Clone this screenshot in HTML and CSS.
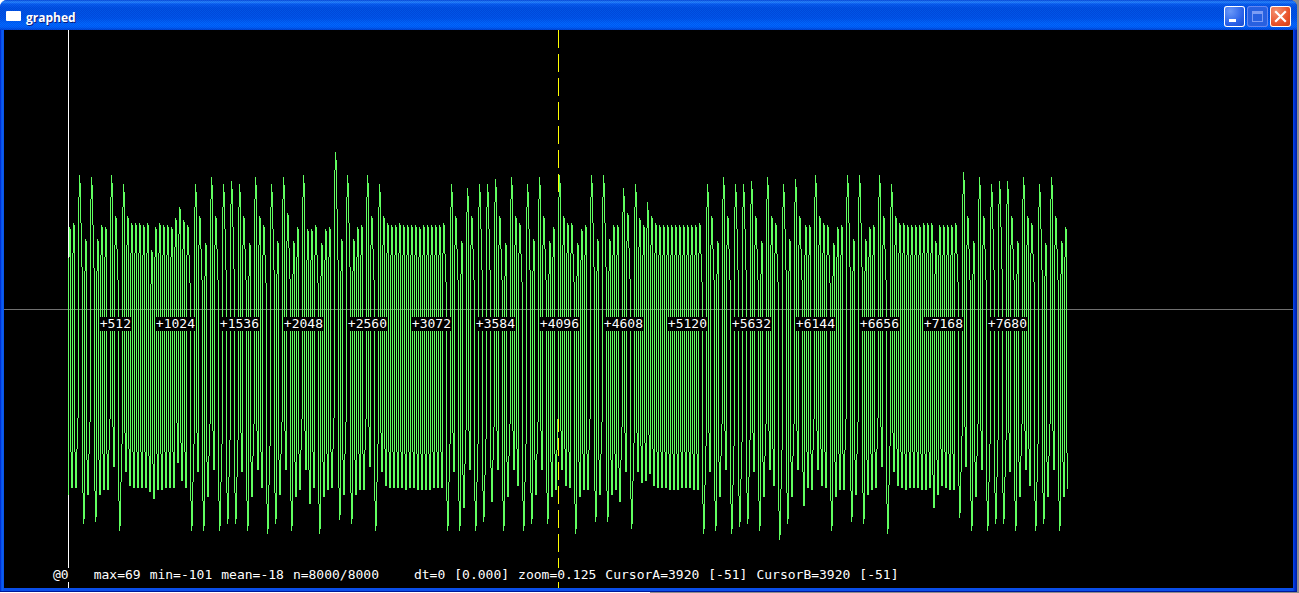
FILE: index.html
```html
<!DOCTYPE html>
<html lang="en">
<head>
<meta charset="utf-8">
<title>graphed</title>
<link rel="stylesheet" href="styles.css">
</head>
<body>
<main class="window">
  <header class="titlebar">
    <span class="app-icon"></span>
    <h1 class="title">graphed</h1>
    <div class="controls">
      <button class="control" type="button" aria-label="Minimize">
        <svg width="21" height="21" shape-rendering="crispEdges"><path d="M5 13h7v3H5z" fill="#fff"/></svg>
      </button>
      <button class="control control-disabled" type="button" aria-label="Maximize" disabled>
        <svg width="21" height="21" shape-rendering="crispEdges"><path d="M5.500 5.500h10v10h-10zM5 6.500h11M5 7.500h11" fill="none" stroke="#7c9cf4"/></svg>
      </button>
      <button class="control control-close" type="button" aria-label="Close">
        <svg width="21" height="21"><path d="M6 6l9 9M15 6l-9 9" stroke="#fff" stroke-width="2.200" stroke-linecap="square"/></svg>
      </button>
    </div>
  </header>
  <section class="plot">
    <svg class="canvas" shape-rendering="crispEdges" role="img" aria-label="Waveform">
      <line class="axis" x1="0" y1="279.5" x2="100%" y2="279.5"/>
      <line class="origin" x1="64.5" y1="0" x2="64.5" y2="100%"/>
      <line class="cursor" x1="554.5" y1="0" x2="554.5" y2="100%"/>
      <path class="wave" id="wave" transform="translate(-4 -30)"/>
    </svg>
    <div class="ticks">
      <div><span>+512</span></div><div><span>+1024</span></div><div><span>+1536</span></div><div><span>+2048</span></div><div><span>+2560</span></div><div><span>+3072</span></div><div><span>+3584</span></div><div><span>+4096</span></div><div><span>+4608</span></div><div><span>+5120</span></div><div><span>+5632</span></div><div><span>+6144</span></div><div><span>+6656</span></div><div><span>+7168</span></div><div><span>+7680</span></div>
    </div>
    <footer class="status">
      <span class="offset">@0</span>
      <div class="stats"><span>max=69</span><span>min=-101</span><span>mean=-18</span><span>n=8000/8000</span></div>
      <div class="stats"><span>dt=0</span><span>[0.000]</span><span>zoom=0.125</span><span>CursorA=3920</span><span>[-51]</span><span>CursorB=3920</span><span>[-51]</span></div>
    </footer>
  </section>
</main>
<script src="wave.js"></script>
</body>
</html>
```
FILE: styles.css
```css
* { box-sizing: border-box; }
body { margin: 0; background: linear-gradient(90deg, #fff 50%, #8c8c8c 50%); }
.window {
  display: flex;
  flex-direction: column;
  height: calc(100vh - 1px);
  margin-right: 2px;
  padding: 0 4px 3px;
  background: linear-gradient(90deg, #0020c8 0, #0a62f4 2px, #0a4ee8 4px, #0a4ee8 calc(100% - 4px), #0038dc calc(100% - 3px), #001ca0 100%);
  border-radius: 7px 7px 0 0;
  border-bottom: 1px solid #001898;
}
.titlebar {
  display: flex;
  align-items: center;
  height: 30px;
  flex: none;
  margin: 0 -4px;
  padding: 3px 6px 0 6px;
  border-radius: 7px 7px 0 0;
  background:
    repeating-conic-gradient(rgba(0, 30, 180, .2) 0 25%, rgba(0, 110, 255, .14) 0 50%) 0 0 / 2px 2px,
    linear-gradient(#0848d8 0, #3090ff 2px, #0a60f0 4px, #0050e0 8px, #0054e6 18px, #0068ff 24px, #0064fc 27px, #0044d0 30px);
}
.app-icon { width: 15px; height: 10px; margin-top: -1px; background: #fff; border-radius: 1px; }
.title {
  flex: 1;
  margin: 2px 0 0 5px;
  font: bold 12px/18px "Open Sans", "Noto Sans", sans-serif;
  color: #fff;
  text-shadow: 1px 1px #0a1e80;
}
.controls { display: flex; gap: 2px; }
.control {
  width: 21px;
  height: 21px;
  padding: 0;
  border: 0;
  border-radius: 3px;
  box-shadow: inset 0 0 0 1px #fff;
  background: radial-gradient(circle at 30% 25%, #6a98f8, #2860e8 60%, #1848c8);
}
.control svg { display: block; }
.control-disabled { box-shadow: inset 0 0 0 1px #6688f0; background: #2860e0; }
.control-close { background: radial-gradient(circle at 30% 25%, #f49070, #e85028 60%, #c83c10); }
.plot { position: relative; flex: 1; min-height: 0; overflow: hidden; background: #000; }
.canvas { display: block; width: 100%; height: 100%; }
.axis { stroke: #707070; }
.origin { stroke: #fff; }
.cursor { stroke: #ff0; stroke-dasharray: 18 6; }
.wave { fill: none; stroke: #60ff60; }
.ticks, .status { position: absolute; color: #fff; font: 13px/14px "DejaVu Sans Mono", monospace; }
.ticks { top: 287px; left: 64px; display: flex; }
.ticks div { width: 64px; text-align: right; }
.ticks span { display: inline-block; padding-right: 1px; background: #000; }
.status { bottom: 6px; left: 49px; display: flex; gap: 35px; white-space: nowrap; }
.status span { background: #000; }
.offset { margin-right: -10px; }
.stats { display: flex; gap: 9px; }
```
FILE: wave.js
```js
// Extremes of the signal: column, level.
const peaks = `69,227 73,223 79,175 85,239 91,177 97,239 101,225 105,227 111,175 115,216 123,184 127,216 131,223 135,223 139,223 143,225 147,223 151,250 155,227 159,223 163,225 167,225 171,227 175,218 179,207 183,220 187,225 195,184 199,216 205,243 211,177 215,216 223,184 231,181 239,184 243,216 249,243 255,177 259,216 263,225 271,184 277,241 283,177 287,213 293,241 297,227 303,175 307,229 311,229 315,225 321,243 325,229 329,227 335,152 341,239 347,175 353,239 357,227 361,225 367,175 371,216 379,184 383,216 387,223 391,225 395,225 399,223 403,225 407,225 411,225 415,225 419,227 423,225 427,225 431,225 435,225 439,225 443,223 451,184 455,216 461,241 467,188 471,216 479,184 487,184 495,179 499,216 505,243 511,177 515,216 519,223 527,184 533,239 539,177 543,216 549,241 553,227 559,175 563,216 567,223 571,223 577,243 581,229 585,225 591,175 597,239 603,175 609,239 613,225 617,225 623,188 627,213 635,184 639,218 643,225 647,202 651,216 655,223 659,225 663,225 667,225 671,225 675,225 679,225 683,225 687,225 691,225 695,225 699,223 707,184 711,216 717,241 723,177 727,216 735,184 743,184 751,181 755,216 761,241 767,177 771,216 775,223 783,184 789,239 795,179 799,216 805,225 809,225 815,175 819,216 823,223 827,225 833,243 837,227 841,225 847,175 853,239 859,175 865,239 869,227 873,225 879,175 883,216 891,184 895,216 899,223 903,223 907,225 911,225 915,225 919,225 923,223 927,223 931,223 935,241 939,225 943,225 947,225 951,225 955,223 963,172 967,216 973,241 979,177 983,216 991,184 999,181 1007,181 1011,216 1017,241 1023,177 1027,216 1031,223 1039,184 1045,243 1051,177 1055,216 1061,241 1065,227`;
const troughs = `71,488 75,488 83,524 87,495 95,522 99,495 103,490 107,490 113,467 119,531 125,472 129,486 133,488 137,488 141,488 145,488 149,492 153,499 157,490 161,490 165,488 169,488 173,488 177,463 181,481 185,488 191,531 197,472 203,531 207,497 213,470 219,531 227,524 235,524 241,472 247,531 251,497 257,470 261,488 267,534 275,524 279,495 285,470 291,531 295,497 299,490 305,470 309,504 313,488 319,534 323,497 327,490 331,488 339,520 343,495 351,524 355,495 359,490 363,490 369,467 375,531 381,472 385,486 389,488 393,488 397,488 401,488 405,490 409,488 413,488 417,490 421,490 425,490 429,490 433,488 437,488 441,488 447,531 453,472 459,531 463,508 469,470 475,531 483,522 491,502 497,470 503,531 507,497 513,470 517,486 523,531 531,524 535,495 541,470 547,524 551,497 555,490 561,470 565,486 569,488 575,534 579,497 583,490 587,490 595,522 599,495 607,522 611,495 615,490 619,502 625,472 631,529 637,472 641,483 645,481 649,474 653,486 657,488 661,488 665,488 669,490 673,490 677,490 681,488 685,488 689,488 693,490 697,490 703,534 709,472 715,531 719,497 725,470 731,534 739,527 747,524 753,472 759,531 763,497 769,470 773,486 779,540 787,524 791,497 797,470 803,506 807,488 811,490 817,470 821,486 825,488 831,531 835,497 839,490 843,490 851,522 855,495 863,524 867,495 871,490 875,488 881,467 887,534 893,472 897,486 901,488 905,490 909,488 913,488 917,488 921,490 925,490 929,488 933,508 937,495 941,486 945,488 949,490 953,490 959,518 965,467 971,531 975,497 981,470 987,531 995,524 1003,524 1009,472 1015,531 1019,497 1025,470 1029,486 1035,531 1043,524 1047,497 1053,470 1059,531 1063,497 1067,489`;

const zero = 309;
const parse = (list, top) => list.split(" ").map(pair => {
  const [x, y] = pair.split(",").map(Number);
  return { x, y, top };
});
const points = [...parse(peaks, true), ...parse(troughs, false)].sort((a, b) => a.x - b.x);

// Level at which the trace enters the column of an extreme.
const entry = p => p.top
  ? p.y + Math.round(22 + (p.y - 175) * 0.16)
  : p.y - Math.round(30 + (531 - p.y) * 0.15);

// The trace leaves a sharp extreme a little short of its full level.
const exit = p => p.top
  ? p.y + (p.y < 205 ? 8 : 2)
  : p.y - (p.y > 515 ? 5 : 0);

let d = "M68.5 258V495";
const bar = (x, y1, y2) => { d += `M${x}.5 ${Math.min(y1, y2)}V${Math.max(y1, y2)}`; };

points.forEach((p, i) => {
  bar(p.x, entry(p), p.y);
  const next = points[i + 1];
  if (!next) return;
  const steps = p.top ? [0.36, 0.69] : [0.22, 0.39];
  let level = exit(p);
  for (let x = p.x + 1, k = 0; x < next.x; x++, k++) {
    const last = x === next.x - 1;
    const target = last ? entry(next) : Math.round(p.y + (zero - p.y) * steps[Math.min(k, 1)]);
    bar(x, level, target);
    level = target;
  }
});
document.getElementById("wave").setAttribute("d", d);
```
